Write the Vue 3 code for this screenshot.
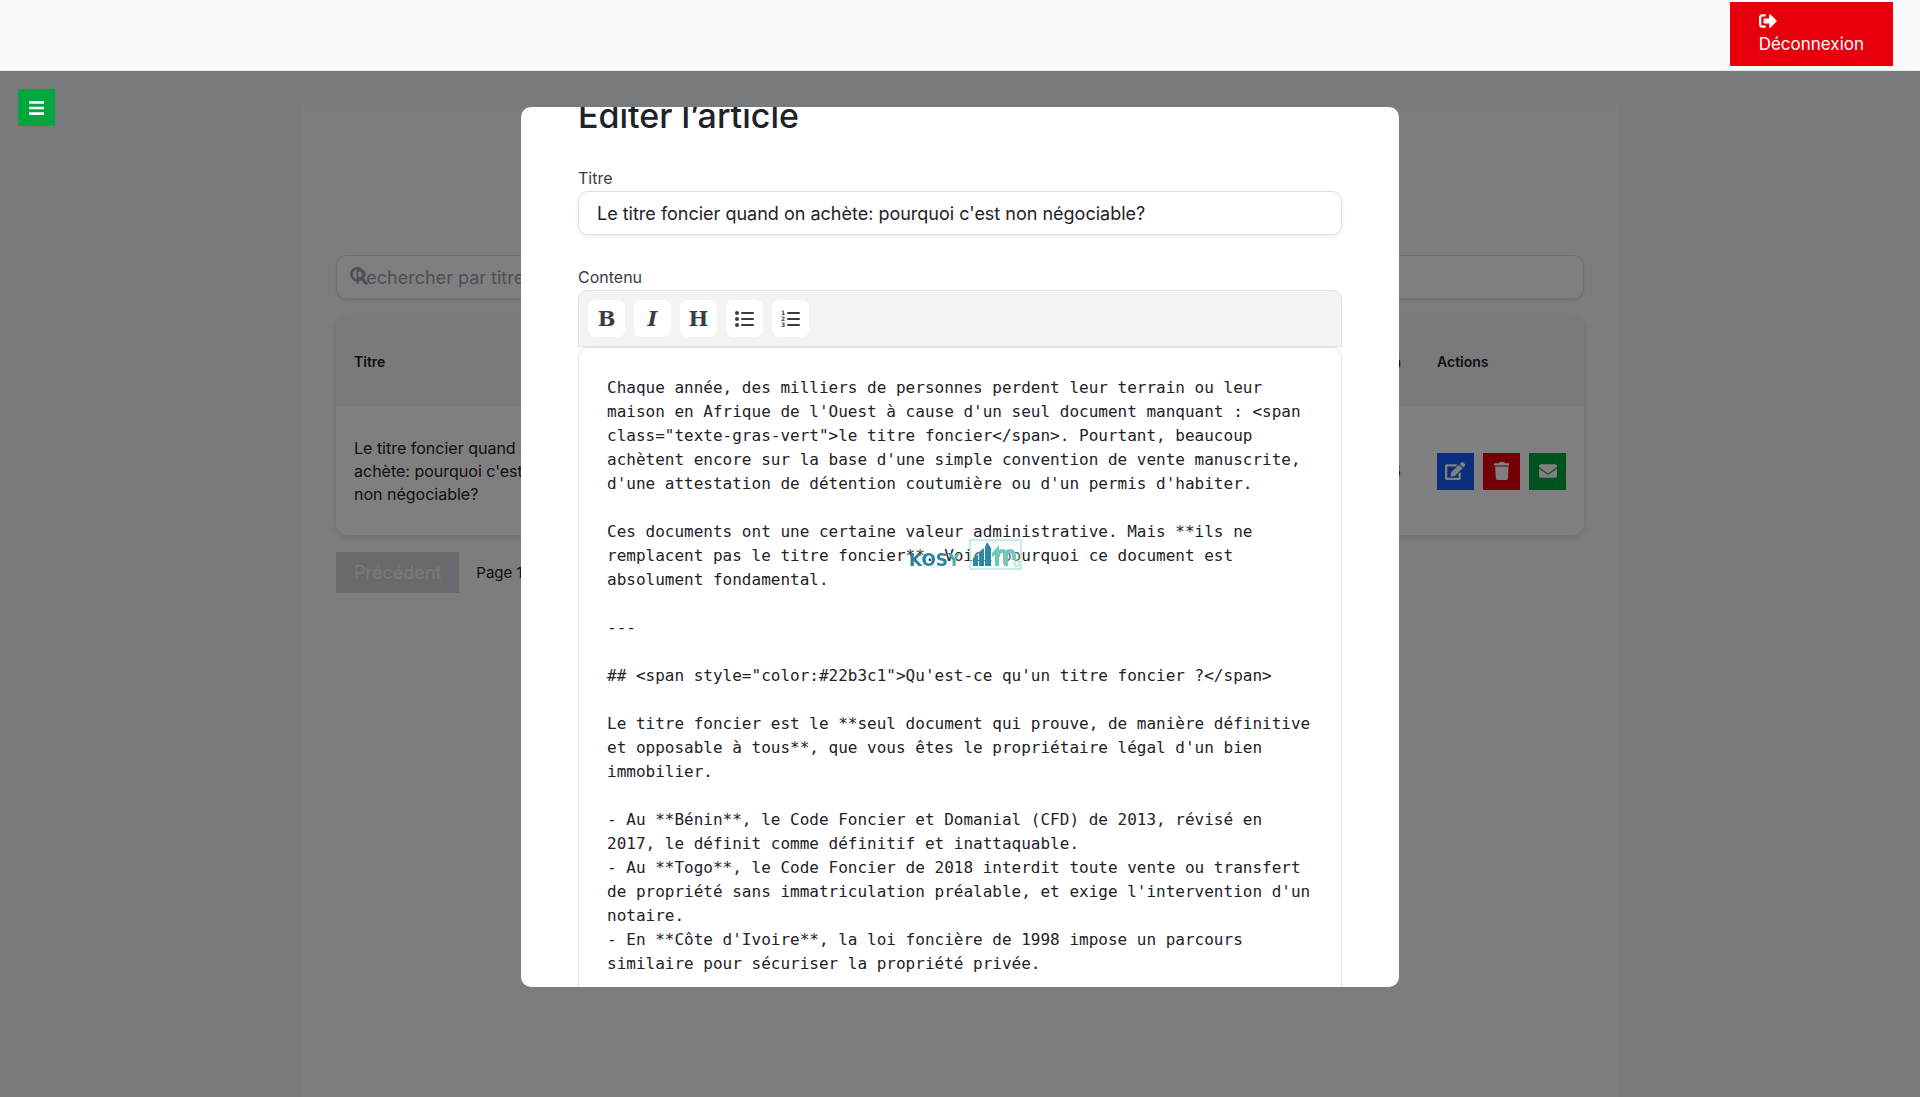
<template>
  <div class="admin">
    <header class="topbar">
      <button class="logout" type="button">
        <svg class="icon" viewBox="0 0 512 512" aria-hidden="true"><path :d="icons.logout" /></svg>
        <span>Déconnexion</span>
      </button>
    </header>

    <button class="square menu" type="button" aria-label="Menu">
      <svg class="icon" viewBox="0 0 448 512" aria-hidden="true"><path :d="icons.bars" /></svg>
    </button>

    <main class="panel">
      <div class="search">
        <svg class="icon" viewBox="0 0 512 512" aria-hidden="true"><path :d="icons.search" /></svg>
        <input v-model="recherche" type="text" placeholder="Rechercher par titre" aria-label="Rechercher par titre" />
      </div>

      <table class="articles">
        <thead>
          <tr>
            <th class="col-titre">Titre</th>
            <th class="col-date">Publication</th>
            <th class="col-actions">Actions</th>
          </tr>
        </thead>
        <tbody>
          <tr v-for="article in articles" :key="article.id">
            <td>{{ article.titre }}</td>
            <td class="col-date">{{ article.date }}</td>
            <td>
              <div class="actions">
                <button class="square edit" type="button" aria-label="Modifier">
                  <svg class="icon" viewBox="0 0 576 512" aria-hidden="true"><path :d="icons.edit" /></svg>
                </button>
                <button class="square delete" type="button" aria-label="Supprimer">
                  <svg class="icon" viewBox="0 0 448 512" aria-hidden="true"><path :d="icons.trash" /></svg>
                </button>
                <button class="square send" type="button" aria-label="Envoyer">
                  <svg class="icon" viewBox="0 0 512 512" aria-hidden="true"><path :d="icons.mail" /></svg>
                </button>
              </div>
            </td>
          </tr>
        </tbody>
      </table>

      <div class="pagination">
        <button type="button" disabled>Précédent</button>
        <span>Page 1</span>
      </div>
    </main>

    <div class="overlay">
      <div ref="modal" class="modal" role="dialog" aria-labelledby="modal-title">
        <h2 id="modal-title">Éditer l’article</h2>

        <div class="field">
          <label for="titre">Titre</label>
          <input id="titre" v-model="titre" type="text" />
        </div>

        <div class="field">
          <label for="contenu">Contenu</label>
          <div class="toolbar">
            <button class="square tool" type="button" aria-label="Gras">B</button>
            <button class="square tool italic" type="button" aria-label="Italique">I</button>
            <button class="square tool" type="button" aria-label="Titre">H</button>
            <button class="square tool" type="button" aria-label="Liste à puces">
              <svg class="list" viewBox="0 0 20 18" aria-hidden="true">
                <circle cx="2" cy="3" r="2" /><circle cx="2" cy="9" r="2" /><circle cx="2" cy="15" r="2" />
                <rect x="6" y="2" width="13" height="2" rx="1" />
                <rect x="6" y="8" width="13" height="2" rx="1" />
                <rect x="6" y="14" width="13" height="2" rx="1" />
              </svg>
            </button>
            <button class="square tool" type="button" aria-label="Liste numérotée">
              <svg class="list" viewBox="0 0 20 18" aria-hidden="true">
                <text x="0" y="5">1</text><text x="0" y="11">2</text><text x="0" y="17">3</text>
                <rect x="6" y="2" width="13" height="2" rx="1" />
                <rect x="6" y="8" width="13" height="2" rx="1" />
                <rect x="6" y="14" width="13" height="2" rx="1" />
              </svg>
            </button>
          </div>
          <textarea id="contenu" v-model="contenu" spellcheck="false"></textarea>
        </div>
      </div>
    </div>

    <div class="loader">
      <svg width="114" height="34" viewBox="0 0 114 34" aria-label="Kosy Immo">
        <defs>
          <linearGradient id="marque">
            <stop offset="0" stop-color="#2b7f9f" />
            <stop offset="0.7" stop-color="#2b86a3" />
            <stop offset="1" stop-color="#7fd0c4" />
          </linearGradient>
        </defs>
        <text class="brand" x="0" y="28" fill="url(#marque)">KOSY</text>
        <rect x="61" y="2" width="51" height="29" fill="#e8f8f5" fill-opacity="0.3" stroke="#9adcd0" />
        <g fill="#2f86a5">
          <path d="M64 20l5-4v12h-5z" />
          <path d="M70 14l5-4v18h-5z" />
          <path d="M76 9l2-5 4 6v18h-6z" />
        </g>
        <path d="M83 15l7-8v21h-4V17l-3 2z" fill="#72c9bb" />
        <path d="M89 19q0-6 4-6t4 6v9M97 19q0-6 4-6t4 6v3" fill="none" stroke="#72c9bb" stroke-width="4" />
        <rect x="106" y="23" width="4" height="5" fill="none" stroke="#9adcd0" />
      </svg>
    </div>
  </div>
</template>

<script setup>
import { ref, onMounted } from "vue";

const recherche = ref("");
const modal = ref(null);
const titre = ref("Le titre foncier quand on achète: pourquoi c'est non négociable?");

const articles = ref([
  { id: 1, titre: titre.value, date: "12/01/2026" },
]);

const contenu = ref(`Chaque année, des milliers de personnes perdent leur terrain ou leur maison en Afrique de l'Ouest à cause d'un seul document manquant : <span class="texte-gras-vert">le titre foncier</span>. Pourtant, beaucoup achètent encore sur la base d'une simple convention de vente manuscrite, d'une attestation de détention coutumière ou d'un permis d'habiter.

Ces documents ont une certaine valeur administrative. Mais **ils ne remplacent pas le titre foncier**. Voici pourquoi ce document est absolument fondamental.

---

## <span style="color:#22b3c1">Qu'est-ce qu'un titre foncier ?</span>

Le titre foncier est le **seul document qui prouve, de manière définitive et opposable à tous**, que vous êtes le propriétaire légal d'un bien immobilier.

- Au **Bénin**, le Code Foncier et Domanial (CFD) de 2013, révisé en 2017, le définit comme définitif et inattaquable.
- Au **Togo**, le Code Foncier de 2018 interdit toute vente ou transfert de propriété sans immatriculation préalable, et exige l'intervention d'un notaire.
- En **Côte d'Ivoire**, la loi foncière de 1998 impose un parcours similaire pour sécuriser la propriété privée.
`);

const icons = {
  logout: "M497 273L329 441c-15 15-41 4.5-41-17v-96H152c-13.3 0-24-10.7-24-24v-96c0-13.3 10.7-24 24-24h136V88c0-21.4 25.9-32 41-17l168 168c9.3 9.4 9.3 24.6 0 34zM192 436v-40c0-6.6-5.4-12-12-12H96c-17.7 0-32-14.3-32-32V160c0-17.7 14.3-32 32-32h84c6.6 0 12-5.4 12-12V76c0-6.6-5.4-12-12-12H96c-53 0-96 43-96 96v192c0 53 43 96 96 96h84c6.6 0 12-5.4 12-12z",
  bars: "M16 132h416c8.8 0 16-7.2 16-16V76c0-8.8-7.2-16-16-16H16C7.2 60 0 67.2 0 76v40c0 8.8 7.2 16 16 16zm0 160h416c8.8 0 16-7.2 16-16v-40c0-8.8-7.2-16-16-16H16c-8.8 0-16 7.2-16 16v40c0 8.8 7.2 16 16 16zm0 160h416c8.8 0 16-7.2 16-16v-40c0-8.8-7.2-16-16-16H16c-8.8 0-16 7.2-16 16v40c0 8.8 7.2 16 16 16z",
  search: "M505 442.7L405.3 343c-4.5-4.5-10.6-7-17-7H372c27.6-35.3 44-79.7 44-128C416 93.1 322.9 0 208 0S0 93.1 0 208s93.1 208 208 208c48.3 0 92.7-16.4 128-44v16.3c0 6.4 2.5 12.5 7 17l99.7 99.7c9.4 9.4 24.6 9.4 33.9 0l28.3-28.3c9.4-9.4 9.4-24.6.1-34zM208 336c-70.7 0-128-57.2-128-128 0-70.7 57.2-128 128-128 70.7 0 128 57.2 128 128 0 70.7-57.2 128-128 128z",
  edit: "M402.6 83.2l90.2 90.2c3.8 3.8 3.8 10 0 13.8L274.4 405.6l-92.8 10.3c-12.4 1.4-22.9-9.1-21.5-21.5l10.3-92.8L388.8 83.2c3.8-3.8 10-3.8 13.8 0zm162-22.9l-48.8-48.8c-15.2-15.2-39.9-15.2-55.2 0l-35.4 35.4c-3.8 3.8-3.8 10 0 13.8l90.2 90.2c3.8 3.8 10 3.8 13.8 0l35.4-35.4c15.2-15.3 15.2-40 0-55.2zM384 346.2V448H64V128h229.8c3.2 0 6.2-1.3 8.5-3.5l40-40c7.6-7.6 2.2-20.5-8.5-20.5H48C21.5 64 0 85.5 0 112v352c0 26.5 21.5 48 48 48h352c26.5 0 48-21.5 48-48V306.2c0-10.7-12.9-16-20.5-8.5l-40 40c-2.2 2.3-3.5 5.3-3.5 8.5z",
  trash: "M432 32H312l-9.4-18.7A24 24 0 0 0 281.1 0H166.8a23.7 23.7 0 0 0-21.4 13.3L136 32H16A16 16 0 0 0 0 48v32a16 16 0 0 0 16 16h416a16 16 0 0 0 16-16V48a16 16 0 0 0-16-16zM53.2 467a48 48 0 0 0 47.9 45h245.8a48 48 0 0 0 47.9-45L416 128H32z",
  mail: "M502.3 190.8c3.9-3.1 9.7-.2 9.7 4.7V400c0 26.5-21.5 48-48 48H48c-26.5 0-48-21.5-48-48V195.6c0-5 5.7-7.8 9.7-4.7 22.4 17.4 52.1 39.5 154.1 113.6 21.1 15.4 56.7 47.8 92.2 47.6 35.7.3 72-32.8 92.3-47.6 102-74.1 131.6-96.3 154-113.7zM256 320c23.2.4 56.6-29.2 73.4-41.4 132.7-96.3 142.8-104.7 173.4-128.7 5.8-4.5 9.2-11.5 9.2-18.9v-19c0-26.5-21.5-48-48-48H48c-26.5 0-48 21.5-48 48v19c0 7.4 3.4 14.3 9.2 18.9 30.6 23.9 40.7 32.4 173.4 128.7 16.8 12.2 50.2 41.8 73.4 41.4z",
};

onMounted(() => {
  modal.value.scrollTop = 68;
});
</script>

<style>
body {
  margin: 0;
  background: #f3f4f6;
}
</style>

<style scoped>
* {
  box-sizing: border-box;
}
.admin {
  min-height: 100vh;
  display: flex;
  flex-direction: column;
  font-family: Inter, "Liberation Sans", sans-serif;
  font-size: 16px;
  color: #1e2229;
}
button,
input {
  font: inherit;
}
button {
  border: 0;
}
.icon {
  height: 18px;
  fill: currentColor;
  display: block;
}
.topbar {
  position: relative;
  z-index: 20;
  display: flex;
  justify-content: flex-end;
  padding: 2px 27px 4px;
  background: #f9fafb;
  border-bottom: 1px solid #e5e7eb;
}
.logout {
  display: flex;
  flex-direction: column;
  align-items: flex-start;
  gap: 2px;
  padding: 10px 29px;
  background: #e7000b;
  color: #fff;
  font-size: 17px;
  line-height: 24px;
}
.square {
  display: flex;
  align-items: center;
  justify-content: center;
  width: 37px;
  height: 37px;
  padding: 0;
  color: #fff;
}
.menu {
  position: fixed;
  top: 89px;
  left: 18px;
  z-index: 20;
  background: #00a63e;
}
.panel {
  flex: 1;
  width: calc(100% - 604px);
  min-width: 1000px;
  margin: 36px auto 0;
  padding: 148px 34px 0;
  background: #f8fcf9;
}
.search {
  position: relative;
}
.search .icon {
  position: absolute;
  top: 12px;
  left: 14px;
  color: #99a1af;
}
.search input,
.field input {
  width: 100%;
  height: 44px;
  padding: 0 18px;
  border: 1px solid #dfe1e5;
  border-radius: 10px;
  background: #fff;
  color: inherit;
  font-size: 18px;
  box-shadow: 0 2px 4px rgba(0, 0, 0, 0.08);
}
.search input::placeholder {
  color: #99a1af;
}
.articles {
  width: 100%;
  margin-top: 16px;
  table-layout: fixed;
  border-collapse: collapse;
  border-radius: 12px;
  overflow: hidden;
  background: #fff;
  box-shadow: 0 2px 6px rgba(0, 0, 0, 0.12);
  line-height: 23px;
}
.articles th {
  height: 92px;
  padding: 0 18px;
  background: #f3f4f6;
  font-size: 14px;
  font-weight: 600;
  text-align: left;
}
.articles td {
  height: 128px;
  padding: 0 18px;
}
.articles .col-titre {
  width: 232px;
}
.articles .col-date {
  text-align: right;
}
.articles .col-actions {
  width: 165px;
}
.actions {
  display: flex;
  gap: 9px;
}
.edit {
  background: #155dfc;
}
.delete {
  background: #e7000b;
}
.send {
  background: #00a63e;
}
.pagination {
  display: flex;
  align-items: center;
  gap: 17px;
  margin-top: 17px;
  font-size: 15px;
}
.pagination button {
  height: 41px;
  padding: 0 18px;
  background: #d1d5db;
  color: #f3f4f6;
  font-size: 18px;
}
.overlay {
  position: fixed;
  inset: 0;
  z-index: 10;
  display: flex;
  justify-content: center;
  align-items: center;
  padding: 107px 16px 110px;
  background: rgba(0, 0, 0, 0.5);
}
.modal {
  width: 100%;
  max-width: 878px;
  max-height: 100%;
  padding: 57px;
  overflow-y: auto;
  scrollbar-width: none;
  border-radius: 10px;
  background: #fff;
}
.modal h2 {
  margin: 0 0 31px;
  font-size: 34px;
  line-height: 40px;
  font-weight: 500;
}
.field {
  margin-bottom: 31px;
}
.field label {
  display: block;
  margin-bottom: 2px;
  line-height: 22px;
  color: #383d45;
}
.toolbar {
  display: flex;
  gap: 9px;
  padding: 9px;
  border: 1px solid #dfe1e5;
  border-radius: 10px 10px 0 0;
  background: #f3f4f6;
}
.tool {
  border-radius: 8px;
  background: #fff;
  color: #383d45;
  font-family: "DejaVu Serif", serif;
  font-size: 21px;
  line-height: 24px;
  font-weight: 700;
}
.italic {
  font-style: italic;
}
.list {
  width: 20px;
  height: 18px;
  fill: currentColor;
}
.list text {
  font-family: "DejaVu Sans", sans-serif;
  font-size: 6px;
  font-weight: 700;
}
textarea {
  display: block;
  width: 100%;
  height: 900px;
  padding: 28px;
  border: 1px solid #dfe1e5;
  border-radius: 10px;
  background: #fff;
  color: inherit;
  font-family: "DejaVu Sans Mono", monospace;
  font-size: 16px;
  line-height: 24px;
  resize: none;
}
.loader {
  position: fixed;
  inset: 0;
  z-index: 30;
  display: flex;
  align-items: center;
  justify-content: center;
  padding: 12px 0 0 12px;
  pointer-events: none;
}
.brand {
  font-family: "DejaVu Sans", sans-serif;
  font-size: 17px;
  font-weight: 700;
}
</style>
